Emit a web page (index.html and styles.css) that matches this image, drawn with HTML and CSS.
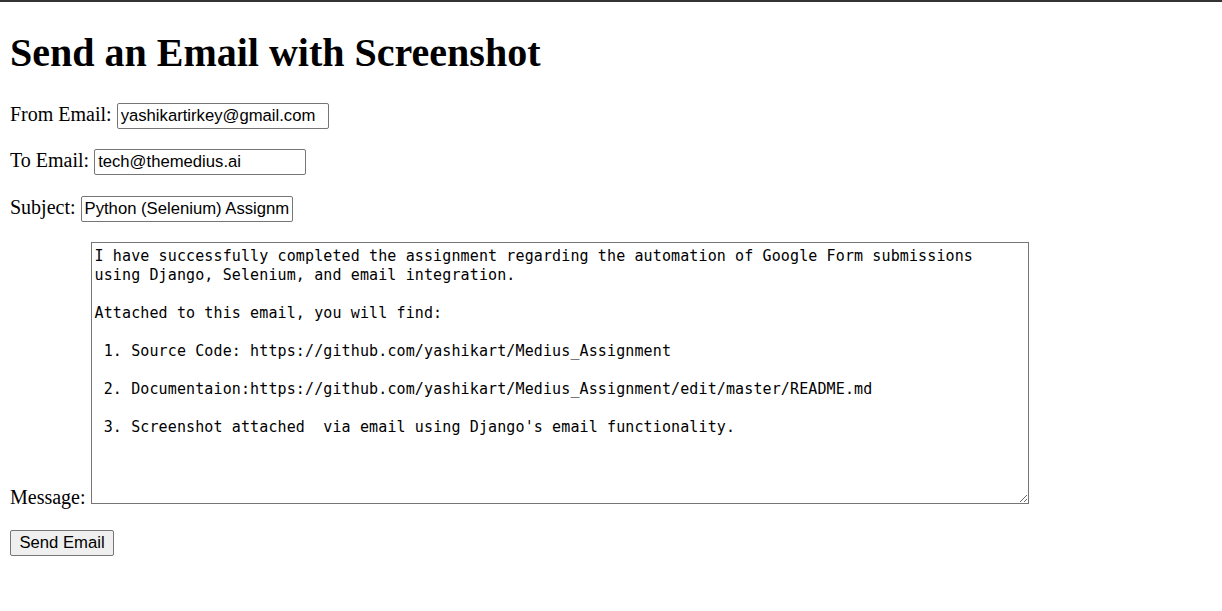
FILE: index.html
```html
<!DOCTYPE html>
<html>
<head>
<meta charset="utf-8">
<title>Send an Email with Screenshot</title>
<link rel="stylesheet" href="styles.css">
</head>
<body>
<div class="topbar"></div>
<main class="page">
<h1 class="title">Send an Email with Screenshot</h1>
<form class="mail-form">
<p class="row"><label class="lbl" for="from">From Email:</label> <input class="field" id="from" type="text" value="yashikartirkey@gmail.com"></p>
<p class="row"><label class="lbl" for="to">To Email:</label> <input class="field" id="to" type="text" value="tech@themedius.ai"></p>
<p class="row"><label class="lbl" for="subj">Subject:</label> <input class="field" id="subj" type="text" value="Python (Selenium) Assignment"></p>
<p class="row"><label class="lbl" for="msg">Message:</label> <textarea class="message" id="msg">I have successfully completed the assignment regarding the automation of Google Form submissions
using Django, Selenium, and email integration.

Attached to this email, you will find:

 1. Source Code: https://github.com/yashikart/Medius_Assignment

 2. Documentaion:https://github.com/yashikart/Medius_Assignment/edit/master/README.md

 3. Screenshot attached  via email using Django's email functionality.</textarea></p>
<button class="send" type="button">Send Email</button>
</form>
</main>
</body>
</html>
```
FILE: styles.css
```css
html, body {
  margin: 0;
  padding: 0;
  background: #fff;
}
body {
  font-family: "Liberation Serif", "Times New Roman", serif;
  font-size: 20px;
  color: #000;
}
.topbar {
  height: 2px;
  background: #333;
}
.page {
  padding: 0 10px;
}
.title {
  font-size: 40px;
  font-weight: bold;
  margin: 26.8px 0;
}
.row {
  margin: 20.5px 0;
}
.field {
  font-family: "Liberation Sans", Arial, sans-serif;
  font-size: 16.67px;
  width: 212px;
  height: 26px;
  box-sizing: border-box;
  padding: 1px 3px;
  border: 1px solid #767676;
  border-radius: 2px;
  color: #000;
  background: #fff;
}
.message {
  font-family: "DejaVu Sans Mono", monospace;
  font-size: 15px;
  letter-spacing: 0.12px;
  line-height: 19px;
  width: 938px;
  height: 262px;
  box-sizing: border-box;
  padding: 4px 3px 3px;
  border: 1px solid #767676;
  border-radius: 0;
  color: #000;
  background: #fff;
  vertical-align: baseline;
  resize: both;
  overflow: hidden;
}
.send {
  font-family: "Liberation Sans", Arial, sans-serif;
  font-size: 16.67px;
  color: #000;
  width: 104px;
  height: 26px;
  padding: 0;
  background: #efefef;
  border: 1px solid #767676;
  border-radius: 2px;
}
```
